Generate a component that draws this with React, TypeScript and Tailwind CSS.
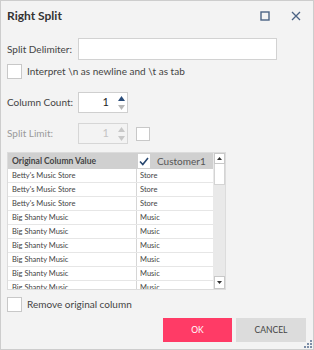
import React from "react";

const rows = [
  ["Betty's Music Store", "Store"],
  ["Betty's Music Store", "Store"],
  ["Betty's Music Store", "Store"],
  ["Big Shanty Music", "Music"],
  ["Big Shanty Music", "Music"],
  ["Big Shanty Music", "Music"],
  ["Big Shanty Music", "Music"],
  ["Big Shanty Music", "Music"],
  ["Big Shanty Music", "Music"],
];

const font = { fontFamily: 'Lato, "Open Sans", sans-serif' };

const Box = () => <div className="w-[15px] h-[15px] bg-white border border-[#c8c8c8] shrink-0" />;

const Spinner = ({ disabled }: { disabled?: boolean }) => (
  <div
    className={`w-[50px] h-[21px] border flex items-center shrink-0 ${
      disabled ? "bg-[#f3f3f3] border-[#d6d6d6]" : "bg-white border-[#cfcfcf]"
    }`}
  >
    <span className={`flex-1 text-right pr-[6px] text-[11px] ${disabled ? "text-[#c4c4c4]" : "text-[#222]"}`}>1</span>
    <div className="w-[12px] h-full flex flex-col items-center justify-center gap-[4px]">
      <svg width="7" height="5" viewBox="0 0 7 5">
        <path d="M3.5 0 L7 5 L0 5 Z" fill={disabled ? "#c8c8c8" : "#2a4c7a"} />
      </svg>
      <svg width="7" height="5" viewBox="0 0 7 5">
        <path d="M0 0 L7 0 L3.5 5 Z" fill={disabled ? "#c8c8c8" : "#b8b8b8"} />
      </svg>
    </div>
  </div>
);

export default function App() {
  return (
    <div
      className="relative w-[314px] h-[350px] border border-[#cdcdcd] bg-[#f3f3f3] flex flex-col text-[#333] overflow-hidden whitespace-nowrap"
      style={font}
    >
      <div className="h-[30px] flex items-center pl-[6px] shrink-0">
        <span className="text-[12px] font-bold text-[#333] flex-1">Right Split</span>
        <svg width="10" height="10" viewBox="0 0 10 10" className="mr-[21px]">
          <rect x="1" y="1" width="8" height="8" fill="none" stroke="#4b6384" strokeWidth="1.4" />
        </svg>
        <svg width="10" height="10" viewBox="0 0 10 10" className="mr-[12px]">
          <path d="M1 1 L9 9 M9 1 L1 9" stroke="#4b6384" strokeWidth="1.3" />
        </svg>
      </div>

      <div className="mt-[7px] pl-[6px] flex items-center shrink-0">
        <span className="w-[71px] shrink-0 text-[10px] text-[#444]">Split Delimiter:</span>
        <div className="w-[199px] h-[22px] bg-white border border-[#d2d2d2]" />
      </div>

      <div className="mt-[4px] pl-[6px] flex items-center gap-[5px] shrink-0">
        <Box />
        <span className="text-[10px] text-[#444]">Interpret \n as newline and \t as tab</span>
      </div>

      <div className="mt-[13px] pl-[6px] flex items-center shrink-0">
        <span className="w-[71px] shrink-0 text-[10px] text-[#444]">Column Count:</span>
        <Spinner />
      </div>

      <div className="mt-[10px] pl-[6px] flex items-center shrink-0">
        <span className="w-[71px] shrink-0 text-[10px] text-[#9a9a9a]">Split Limit:</span>
        <Spinner disabled />
        <div className="ml-[8px] w-[14px] h-[14px] bg-white border border-[#c8c8c8]" />
      </div>

      <div className="mt-[8px] ml-[6px] w-[219px] h-[138px] flex border border-[#dcdcdc] bg-[#e9e9e9] shrink-0">
        <div className="w-[206px] flex flex-col">
          <div className="h-[16px] flex bg-[#d0d0d0] shrink-0">
            <div className="w-[129px] pl-[4px] flex items-center text-[8.5px] font-bold text-[#444]">
              Original Column Value
            </div>
            <div className="flex-1 flex items-center gap-[7px] pl-[1px]">
              <div className="w-[12px] h-[14px] bg-white flex items-center justify-center">
                <svg width="10" height="9" viewBox="0 0 10 9">
                  <path d="M1 4.5 L3.8 7.5 L9 1" fill="none" stroke="#27466f" strokeWidth="1.6" />
                </svg>
              </div>
              <span className="text-[10px] text-[#555]">Customer1</span>
            </div>
          </div>
          <div className="flex-1 overflow-hidden">
            {rows.map(([a, b], i) => (
              <div key={i} className="h-[14px] flex bg-white border-b border-[#e6e6e6]">
                <div className="w-[129px] pl-[4px] text-[7.5px] leading-[13px] text-[#444] border-r border-[#d6d6d6]">{a}</div>
                <div className="flex-1 pl-[3px] text-[7.5px] leading-[13px] text-[#444]">{b}</div>
              </div>
            ))}
          </div>
        </div>
        <div className="w-[11px] ml-[1px] flex flex-col">
          <div className="h-[11px] bg-white border border-[#c8c8c8] flex items-center justify-center">
            <svg width="5" height="3" viewBox="0 0 5 3">
              <path d="M2.5 0 L5 3 L0 3 Z" fill="#333" />
            </svg>
          </div>
          <div className="h-[21px] bg-white border-x border-b border-[#d4d4d4]" />
          <div className="flex-1" />
          <div className="h-[13px] bg-white border border-[#c8c8c8] flex items-center justify-center">
            <svg width="5" height="3" viewBox="0 0 5 3">
              <path d="M0 0 L5 0 L2.5 3 Z" fill="#333" />
            </svg>
          </div>
        </div>
      </div>

      <div className="mt-[7px] pl-[6px] flex items-center gap-[5px] shrink-0">
        <Box />
        <span className="text-[10px] text-[#444]">Remove original column</span>
      </div>

      <div className="mt-[6px] pr-[7px] flex justify-end gap-[4px] shrink-0">
        <button className="w-[69px] h-[24px] bg-[#ff3b66] text-white text-[8.5px]">OK</button>
        <button className="w-[70px] h-[24px] bg-[#dcdcdc] text-[#444] text-[8.5px]">CANCEL</button>
      </div>

      <svg width="8" height="8" viewBox="0 0 8 8" className="absolute right-[1px] bottom-[1px]">
        <g fill="#7d8fa8">
          <rect x="6" y="0" width="2" height="2" />
          <rect x="3" y="3" width="2" height="2" />
          <rect x="6" y="3" width="2" height="2" />
          <rect x="0" y="6" width="2" height="2" />
          <rect x="3" y="6" width="2" height="2" />
          <rect x="6" y="6" width="2" height="2" />
        </g>
      </svg>
    </div>
  );
}
